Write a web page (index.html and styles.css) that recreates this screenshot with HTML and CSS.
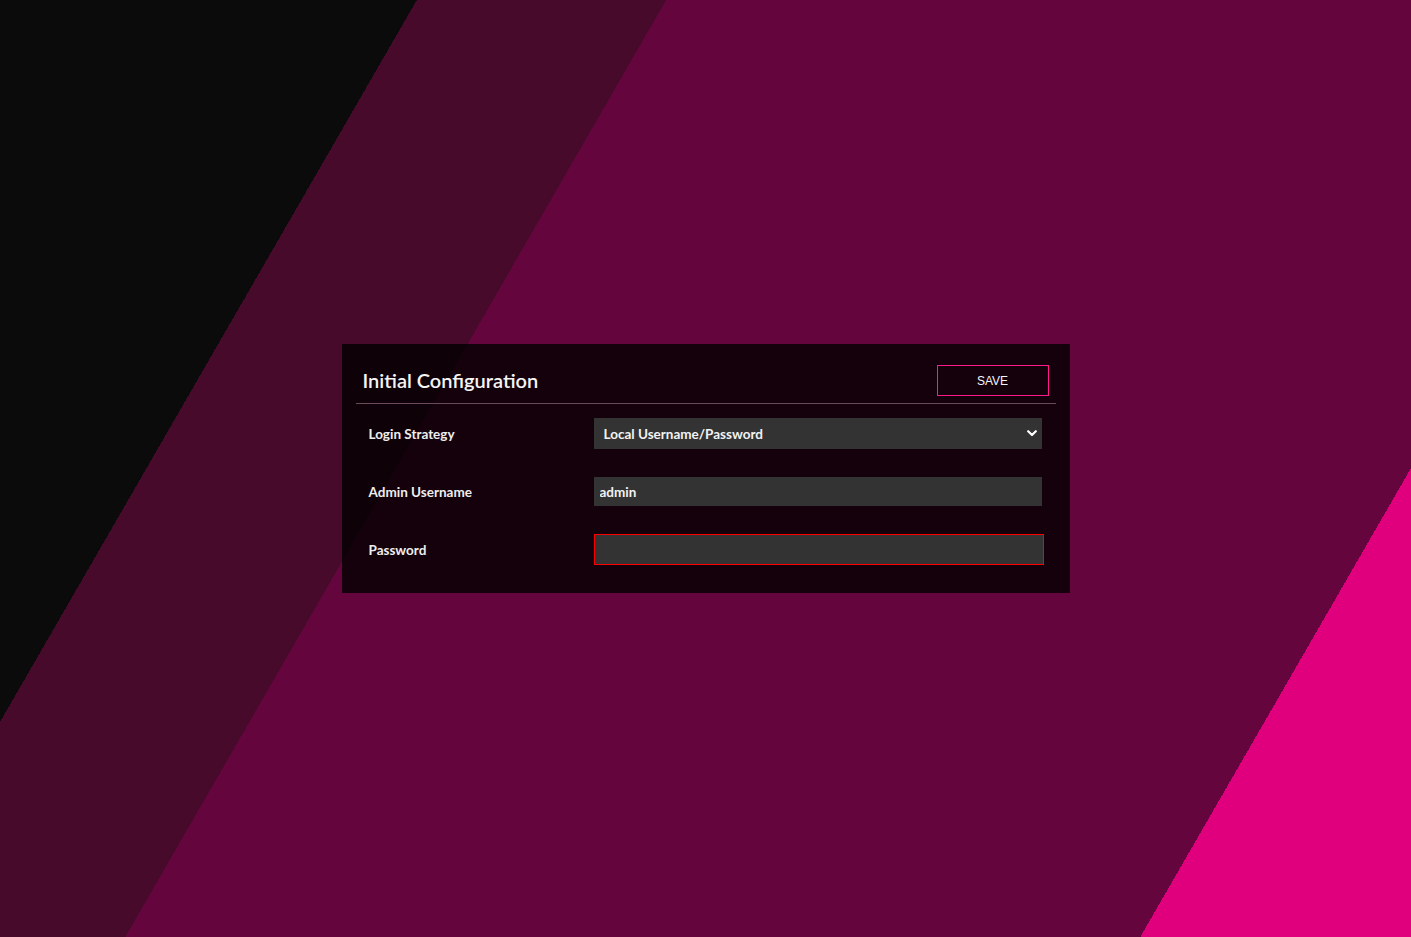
FILE: index.html
```html
<!DOCTYPE html>
<html lang="en">
<head>
<meta charset="utf-8">
<title>Initial Configuration</title>
<link rel="stylesheet" href="styles.css">
</head>
<body>
<main class="page">
  <section class="card">
    <header class="card-header">
      <h1 class="card-title">Initial Configuration</h1>
      <button class="btn-save" type="button">SAVE</button>
    </header>
    <form class="form">
      <div class="row">
        <label class="label" for="strategy">Login Strategy</label>
        <div class="select-wrap">
          <select id="strategy" class="field select">
            <option>Local Username/Password</option>
          </select>
          <svg class="chevron" width="10" height="7" viewBox="0 0 10 7"><path d="M1.2 1.2 L5 5 L8.8 1.2" fill="none" stroke="#fff" stroke-width="2.2" stroke-linecap="round" stroke-linejoin="round"/></svg>
        </div>
      </div>
      <div class="row">
        <label class="label" for="user">Admin Username</label>
        <input id="user" class="field input" type="text" value="admin">
      </div>
      <div class="row">
        <label class="label" for="pass">Password</label>
        <input id="pass" class="field input input-error" type="password">
      </div>
    </form>
  </section>
</main>
</body>
</html>
```

FILE: styles.css
```css
html, body {
  margin: 0;
  padding: 0;
  height: 100%;
}
body {
  font-family: Lato, "Liberation Sans", sans-serif;
  color: #f2f2f2;
  background: linear-gradient(120deg,
    #0b0b0b 0, #0b0b0b 361px,
    #470a2b 361px, #470a2b 577px,
    #64063d 577px, #64063d 1456px,
    #e0007e 1456px);
}
.page {
  height: 100%;
  display: flex;
  align-items: center;
  justify-content: center;
}
.card {
  width: 700px;
  padding: 14px 14px 0;
  background: rgba(0, 0, 0, 0.8);
}
.card-header {
  display: flex;
  align-items: center;
  justify-content: space-between;
  padding: 7px;
  border-bottom: 1px solid #6b4a5b;
}
.card-title {
  margin: 0 0 0 0;
  font-size: 20px;
  font-weight: 600;
  color: #f4f4f4;
  line-height: 31px;
}
.btn-save {
  width: 112px;
  height: 31px;
  background: transparent;
  border: 1px solid #ff1a8c;
  color: #f4f4f4;
  font-family: "Liberation Sans", Arial, sans-serif;
  font-size: 12px;
  padding: 0;
}
.form {
  display: flex;
  flex-direction: column;
  gap: 28px;
  padding: 14px 0 28px 13px;
}
.row {
  display: grid;
  grid-template-columns: 225px 450px;
  align-items: center;
}
.label {
  font-size: 13.5px;
  font-weight: 700;
  color: #eeeeee;
}
.field {
  box-sizing: border-box;
  width: 448px;
  background: #333333;
  border: 0;
  color: #f2f2f2;
  font-family: Lato, "Liberation Sans", sans-serif;
  font-size: 13.5px;
  font-weight: 700;
  outline: none;
  margin: 0;
}
.select-wrap {
  position: relative;
  width: 448px;
}
.select {
  -webkit-appearance: none;
  appearance: none;
  height: 31px;
  padding: 0 10px;
  display: block;
}
.chevron {
  position: absolute;
  right: 5px;
  top: 12px;
}
.input {
  height: 29px;
  padding: 0 6px;
  display: block;
}
.input-error {
  width: 450px;
  height: 31px;
  border: 1px solid #ff0000;
}
```
